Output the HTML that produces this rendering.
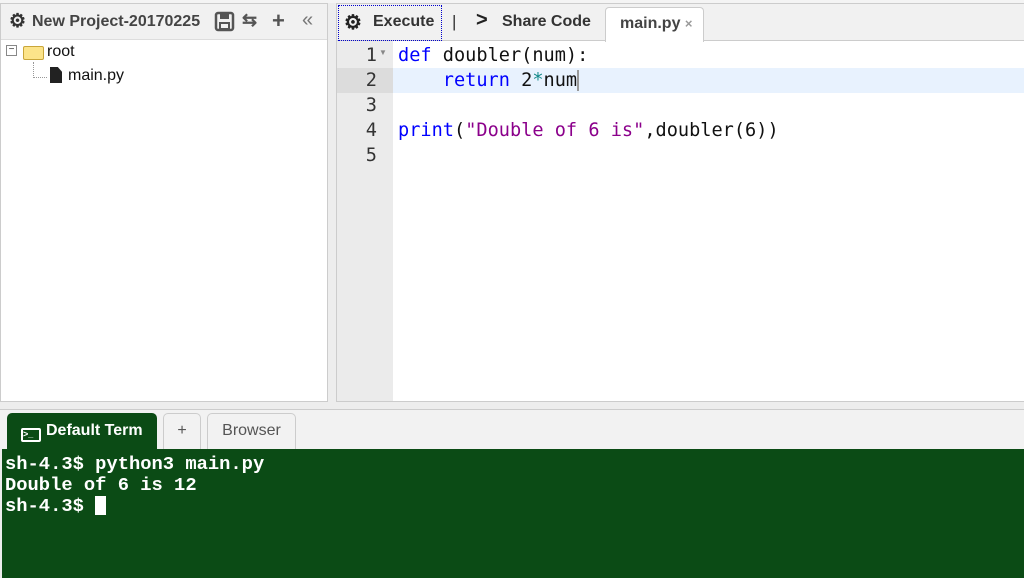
<!DOCTYPE html>
<html><head><style>
*{margin:0;padding:0;box-sizing:border-box}
body{width:1024px;height:578px;overflow:hidden;background:#ededed;font-family:"Liberation Sans",sans-serif;position:relative}
.abs{position:absolute}
#left{left:0;top:3px;width:328px;height:399px;background:#fff;border:1px solid #ccc}
#lhead{left:1px;top:4px;width:326px;height:36px;background:#f1f1f1;border-bottom:1px solid #ddd}
#ed{left:336px;top:3px;width:688px;height:399px;background:#fff;border:1px solid #ccc;border-right:none}
#ebar{left:337px;top:4px;width:687px;height:37px;background:#f1f1f1;border-bottom:1px solid #ccc}
#gut{left:337px;top:41px;width:56px;height:360px;background:#ebebeb}
.code{font-family:"DejaVu Sans Mono","Liberation Mono",monospace;font-size:18.6px;line-height:25px}
.kw{color:#0000ff}.str{color:#8b008b}
#term{left:2px;top:449px;width:1022px;height:129px;background:#0b4b15;color:#fff;font-family:"Liberation Mono",monospace;font-weight:bold;font-size:18.8px;line-height:21px;padding:5px 0 0 3px}
.tab{top:413px;height:37px;border:1px solid #ccc;border-bottom:none;border-radius:5px 5px 0 0;background:#f2f2f2;font-size:16px;color:#555;text-align:center;line-height:34px}
</style></head><body>
<div class="abs" style="left:0;top:0;width:1024px;height:3px;background:#f4f4f4"></div>
<div id="left" class="abs"></div>
<div id="lhead" class="abs"></div>
<div class="abs" style="left:9px;top:10px;font-size:19px;font-weight:bold;color:#333">⚙</div>
<div class="abs" style="left:32px;top:13px;font-size:16px;font-weight:bold;color:#444">New Project-20170225</div>
<svg class="abs" style="left:214px;top:11px" width="22" height="22"><rect x="2" y="2" width="17" height="17" rx="2" fill="none" stroke="#555" stroke-width="2.5"/><rect x="6" y="3" width="9" height="5" fill="#555"/><rect x="6" y="12" width="9" height="6" fill="none" stroke="#555" stroke-width="2"/></svg>
<div class="abs" style="left:242px;top:10px;font-size:18px;font-weight:bold;color:#555">⇆</div>
<div class="abs" style="left:272px;top:8px;font-size:22px;font-weight:bold;color:#555">+</div>
<div class="abs" style="left:302px;top:9px;font-size:20px;color:#777">«</div>
<div class="abs" style="left:6px;top:45px;width:11px;height:11px;border:1px solid #888;background:#fff;font-size:10px;line-height:8px;text-align:center;color:#333">−</div>
<div class="abs" style="left:23px;top:46px;width:21px;height:14px;background:#fce48a;border:1px solid #c9a63a;border-radius:2px"></div>
<div class="abs" style="left:47px;top:43px;font-size:16px;color:#111">root</div>
<div class="abs" style="left:33px;top:62px;width:14px;height:16px;border-left:1px dotted #999;border-bottom:1px dotted #999"></div>
<div class="abs" style="left:50px;top:67px;width:12px;height:16px;background:#222;clip-path:polygon(0 0,65% 0,100% 30%,100% 100%,0 100%)"></div>
<div class="abs" style="left:68px;top:67px;font-size:16px;color:#111">main.py</div>

<div id="ed" class="abs"></div>
<div id="ebar" class="abs"></div>
<div class="abs" style="left:338px;top:5px;width:104px;height:36px;border:1px dotted #00c"></div>
<div class="abs" style="left:344px;top:10px;font-size:20px;font-weight:bold;color:#222">⚙</div>
<div class="abs" style="left:373px;top:13px;font-size:16px;font-weight:bold;color:#333">Execute</div>
<div class="abs" style="left:452px;top:12px;font-size:17px;color:#333">|</div>
<div class="abs" style="left:476px;top:9px;font-size:20px;font-weight:bold;color:#222">&gt;</div>
<div class="abs" style="left:502px;top:13px;font-size:16px;font-weight:bold;color:#333">Share Code</div>
<div class="abs" style="left:605px;top:7px;width:99px;height:35px;background:#fff;border:1px solid #ccc;border-bottom:none;border-radius:4px 4px 0 0"></div>
<div class="abs" style="left:620px;top:15px;font-size:16px;font-weight:bold;color:#444">main.py <span style="color:#999;font-size:13px">×</span></div>
<div id="gut" class="abs"></div>
<div class="abs" style="left:337px;top:68px;width:56px;height:25px;background:#dcdcdc"></div>
<div class="abs" style="left:393px;top:68px;width:631px;height:25px;background:#e8f2fe"></div>
<div class="abs code" style="left:337px;top:43px;width:40px;text-align:right;color:#333">1<br>2<br>3<br>4<br>5</div>
<div class="abs" style="left:379px;top:48px;font-size:8px;color:#888">▼</div>
<div class="abs code" style="left:398px;top:43px;color:#111;white-space:pre"><span class="kw">def</span> doubler(num):
    <span class="kw">return</span> 2<span style="color:#188">*</span>num<span style="border-left:2px solid #999"></span>

<span class="kw">print</span>(<span class="str">"Double of 6 is"</span>,doubler(6))</div>

<div class="abs" style="left:0;top:409px;width:1024px;height:40px;background:#f2f2f2;border-top:1px solid #ccc"></div>
<div class="abs tab" style="left:7px;width:150px;background:#0b4b15;border-color:#0b4b15;color:#fff;font-weight:bold;text-align:left;padding-left:13px"><span style="display:inline-block;width:20px;height:14px;border:2px solid #fff;border-radius:2px;vertical-align:-2px;margin-right:5px;font-size:9px;line-height:9px">&gt;_</span>Default Term</div>
<div class="abs tab" style="left:163px;width:38px">+</div>
<div class="abs tab" style="left:207px;width:89px">Browser</div>
<div id="term" class="abs">sh-4.3$ python3 main.py<br>Double of 6 is 12<br>sh-4.3$ <span style="display:inline-block;width:11px;height:19px;background:#fff;vertical-align:-4px"></span></div>
</body></html>
